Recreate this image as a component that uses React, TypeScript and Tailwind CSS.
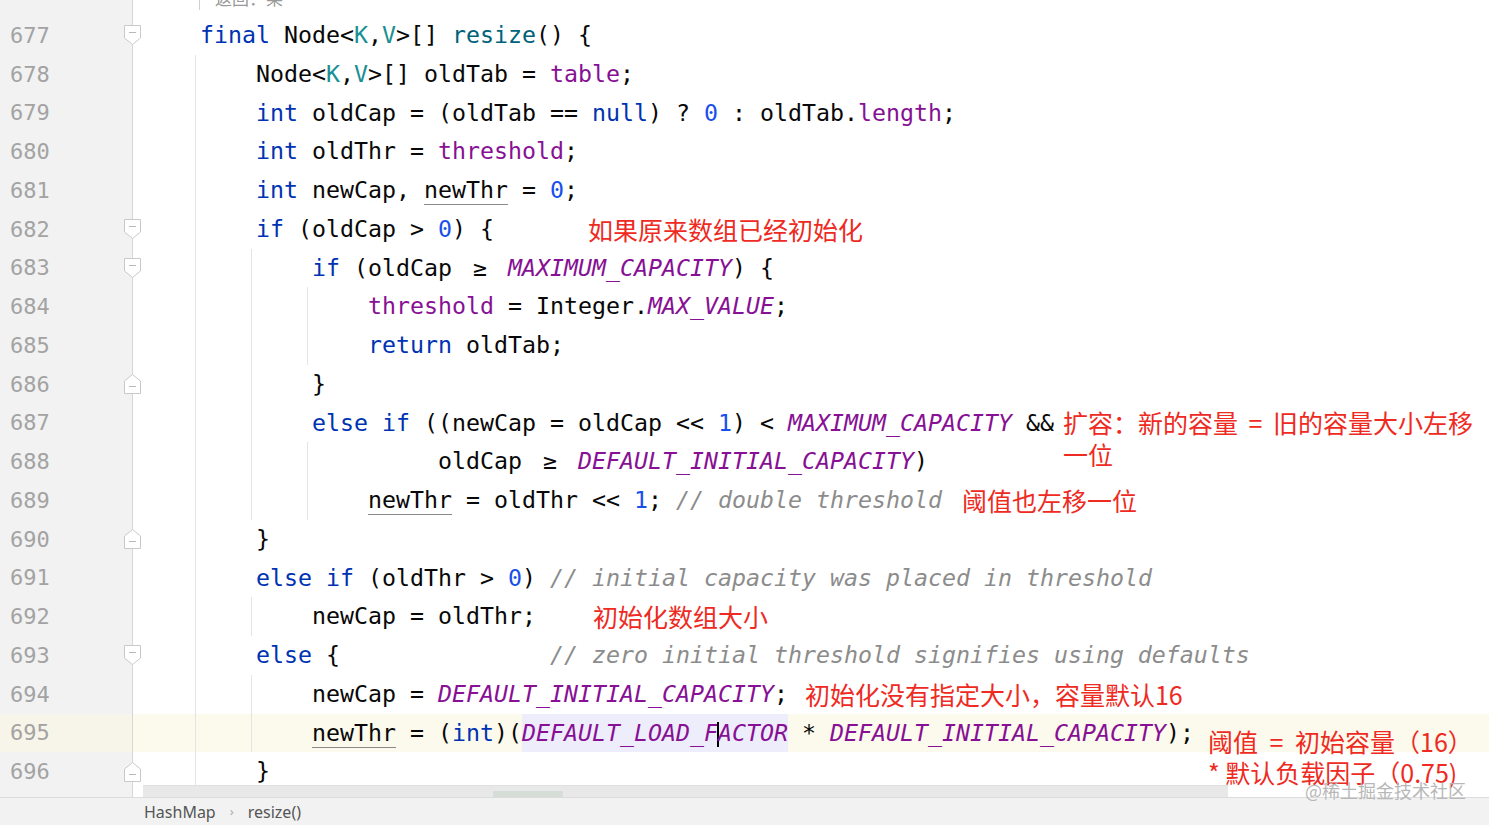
import React from "react";

type Seg = [string, string?];

const KW = "text-[#0033b3]";
const TP = "text-[#1a8f94]";
const FN = "text-[#00627a]";
const FD = "text-[#871094]";
const CS = "text-[#871094] italic";
const NUM = "text-[#1750eb]";
const CM = "text-[#8c8c8c] italic";
const UL = "underline decoration-[#8a8a8a] underline-offset-[6px] decoration-1";

type Line = {
  n: number;
  guides: number;
  fold?: "down" | "up";
  segs: Seg[];
  note?: { text: string; cls: string };
  current?: boolean;
};

const lines: Line[] = [
  {
    n: 677,
    guides: 0,
    fold: "down",
    segs: [["final", KW], [" Node<"], ["K", TP], [","], ["V", TP], [">[] "], ["resize", FN], ["() {"]],
  },
  { n: 678, guides: 1, segs: [["Node<"], ["K", TP], [","], ["V", TP], [">[] oldTab = "], ["table", FD], [";"]] },
  {
    n: 679,
    guides: 1,
    segs: [["int", KW], [" oldCap = (oldTab == "], ["null", KW], [") ? "], ["0", NUM], [" : oldTab."], ["length", FD], [";"]],
  },
  { n: 680, guides: 1, segs: [["int", KW], [" oldThr = "], ["threshold", FD], [";"]] },
  { n: 681, guides: 1, segs: [["int", KW], [" newCap, "], ["newThr", UL], [" = "], ["0", NUM], [";"]] },
  {
    n: 682,
    guides: 1,
    fold: "down",
    segs: [["if", KW], [" (oldCap > "], ["0", NUM], [") {"]],
    note: { text: "如果原来数组已经初始化", cls: "ml-[94px] whitespace-pre leading-[38.75px]" },
  },
  { n: 683, guides: 2, fold: "down", segs: [["if", KW], [" (oldCap "], ["≥", "ge"], [" "], ["MAXIMUM_CAPACITY", CS], [") {"]] },
  { n: 684, guides: 3, segs: [["threshold", FD], [" = Integer."], ["MAX_VALUE", CS], [";"]] },
  { n: 685, guides: 3, segs: [["return", KW], [" oldTab;"]] },
  { n: 686, guides: 2, fold: "up", segs: [["}"]] },
  {
    n: 687,
    guides: 2,
    segs: [["else", KW], [" "], ["if", KW], [" ((newCap = oldCap << "], ["1", NUM], [") < "], ["MAXIMUM_CAPACITY", CS], [" &&"]],
    note: {
      text: "扩容：新的容量 = 旧的容量大小左移一位",
      cls: "ml-[9px] w-[418px] whitespace-normal leading-[32px] relative top-[2px]",
    },
  },
  { n: 688, guides: 3, segs: [["     oldCap "], ["≥", "ge"], [" "], ["DEFAULT_INITIAL_CAPACITY", CS], [")"]] },
  {
    n: 689,
    guides: 3,
    segs: [["newThr", UL], [" = oldThr << "], ["1", NUM], ["; "], ["// double threshold", CM]],
    note: { text: "阈值也左移一位", cls: "ml-[20px] whitespace-pre leading-[38.75px]" },
  },
  { n: 690, guides: 1, fold: "up", segs: [["}"]] },
  {
    n: 691,
    guides: 1,
    segs: [["else", KW], [" "], ["if", KW], [" (oldThr > "], ["0", NUM], [") "], ["// initial capacity was placed in threshold", CM]],
  },
  {
    n: 692,
    guides: 2,
    segs: [["newCap = oldThr;"]],
    note: { text: "初始化数组大小", cls: "ml-[57px] whitespace-pre leading-[38.75px]" },
  },
  {
    n: 693,
    guides: 1,
    fold: "down",
    segs: [["else", KW], [" {               "], ["// zero initial threshold signifies using defaults", CM]],
  },
  {
    n: 694,
    guides: 2,
    segs: [["newCap = "], ["DEFAULT_INITIAL_CAPACITY", CS], [";"]],
    note: { text: "初始化没有指定大小，容量默认16", cls: "ml-[17px] whitespace-pre leading-[38.75px]" },
  },
  {
    n: 695,
    guides: 2,
    current: true,
    segs: [["newThr", UL], [" = ("], ["int", KW], [")("], ["LOAD", "hl"], [" * "], ["DEFAULT_INITIAL_CAPACITY", CS], [");"]],
  },
  { n: 696, guides: 1, fold: "up", segs: [["}"]] },
];

function Fold({ dir }: { dir: "down" | "up" }) {
  return (
    <svg width="17" height="20" viewBox="0 0 17 20" className="relative z-10 -mr-[9px] shrink-0">
      {dir === "down" ? (
        <>
          <path d="M0.5 0.5H16.5V13L8.5 19.5L0.5 13Z" fill="#fff" stroke="#c9c9c9" />
          <path d="M5 7.5H12" stroke="#b8b8b8" />
        </>
      ) : (
        <>
          <path d="M0.5 19.5H16.5V7L8.5 0.5L0.5 7Z" fill="#fff" stroke="#c9c9c9" />
          <path d="M5 12.5H12" stroke="#b8b8b8" />
        </>
      )}
    </svg>
  );
}

function Segment({ s }: { s: Seg }) {
  const [t, c] = s;
  if (c === "ge") {
    return <span className="inline-block w-[28px] text-center">{t}</span>;
  }
  if (c === "hl") {
    return (
      <span className="inline-block bg-[#ededfc] text-[#871094] italic">
        DEFAULT_LOAD_F
        <span className="inline-block w-[2px] h-[25px] bg-black -mx-[1px] align-middle" />
        ACTOR
      </span>
    );
  }
  return <span className={c}>{t}</span>;
}

function Row({ line }: { line: Line }) {
  return (
    <div className={`flex h-[38.75px] shrink-0 ${line.current ? "bg-[#fcfaed]" : ""}`}>
      <div
        className={`w-[133px] shrink-0 flex items-center justify-between pl-[10px] border-r border-[#d6d6d6] ${
          line.current ? "bg-[#f7f5e9]" : "bg-[#f2f2f2]"
        }`}
      >
        <span className="text-[22px] text-[#a3a3a3]">{line.n}</span>
        {line.fold && <Fold dir={line.fold} />}
      </div>
      <div className="flex items-start pl-[62px] h-full">
        {Array.from({ length: line.guides }).map((_, i) => (
          <div key={i} className="w-[56px] h-full shrink-0 border-l border-[#e4e4e4]" />
        ))}
        <div className="pl-[5px] whitespace-pre leading-[38.75px] text-[#080808]">
          {line.segs.map((s, i) => (
            <Segment key={i} s={s} />
          ))}
        </div>
        {line.note && (
          <span
            className={`inline-block shrink-0 text-[25px] text-[#ee2a22] [word-spacing:5px] ${line.note.cls}`}
            style={{ fontFamily: '"Noto Sans CJK SC", "Noto Sans", sans-serif' }}
          >
            {line.note.text}
          </span>
        )}
      </div>
    </div>
  );
}

export default function App() {
  return (
    <div
      className="relative w-[1489px] h-[825px] overflow-hidden bg-white flex flex-col"
      style={{ fontFamily: '"DejaVu Sans Mono", "Liberation Mono", monospace' }}
    >
      <div className="relative h-[797px] flex flex-col overflow-hidden text-[23.25px]">
        {/* popup tail cut at the top */}
        <div className="flex h-[16px] shrink-0">
          <div className="w-[133px] shrink-0 bg-[#f2f2f2] border-r border-[#d6d6d6]" />
          <div className="ml-[66px] h-[10px] border-l border-[#d0d0d0] pl-[15px] overflow-hidden">
            <div
              className="-mt-[14px] h-[24px] leading-[24px] text-[17px] text-[#9a9a9a]"
              style={{ fontFamily: '"Noto Sans CJK SC", sans-serif' }}
            >
              返回：某
            </div>
          </div>
        </div>

        {lines.map((l) => (
          <Row key={l.n} line={l} />
        ))}

        <div className="flex flex-1">
          <div className="w-[133px] shrink-0 bg-[#f2f2f2] border-r border-[#d6d6d6]" />
          <div className="ml-[61px] border-l border-[#e4e4e4]" />
        </div>

        {/* horizontal scrollbar */}
        <div className="absolute left-[143px] right-0 bottom-0 h-[12px] bg-[#e8e8e8] border-t border-[#e0e0e0]">
          <div className="absolute left-[350px] bottom-0 w-[70px] h-[6px] bg-[#d6ddd6]" />
        </div>

        {/* pasted annotation */}
        <div className="absolute left-[1228px] bottom-0 w-[261px] h-[14px] bg-white" />
        <div
          className="absolute left-[1208px] top-[726px] text-[25px] leading-[31px] text-[#ee2a22]"
          style={{ fontFamily: '"Noto Sans CJK SC", "Noto Sans", sans-serif' }}
        >
          <div className="[word-spacing:6px]">阈值 = 初始容量（16）</div>
          <div>* 默认负载因子（0.75)</div>
        </div>
      </div>

      <div
        className="flex-1 flex items-center pl-[144px] gap-[14px] bg-[#f2f2f2] border-t border-[#dcdcdc] text-[16px] text-[#555]"
        style={{ fontFamily: '"Noto Sans", "Liberation Sans", sans-serif' }}
      >
        <span>HashMap</span>
        <span className="text-[13px] text-[#aaa]">›</span>
        <span>resize()</span>
      </div>

      <div
        className="absolute left-[1305px] top-[777px] text-[18px] text-[#b8b8b8]"
        style={{ fontFamily: '"Noto Sans CJK SC", sans-serif' }}
      >
        @稀土掘金技术社区
      </div>
    </div>
  );
}
